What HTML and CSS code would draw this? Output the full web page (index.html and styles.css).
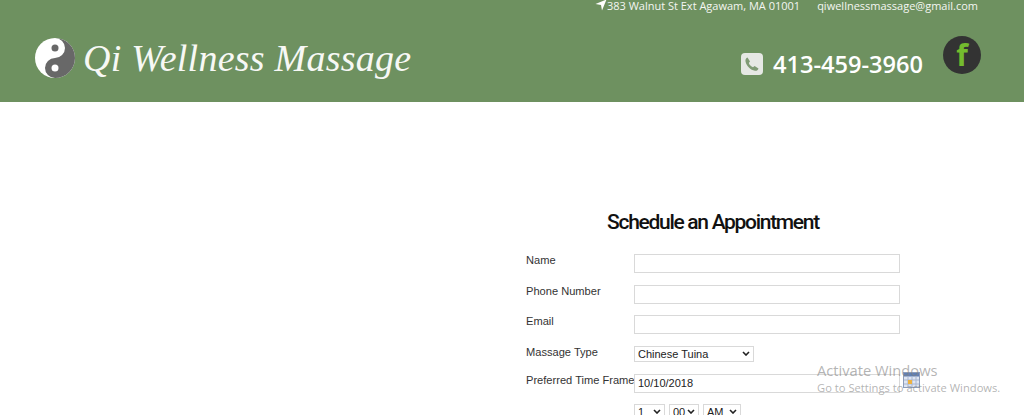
FILE: index.html
```html
<!DOCTYPE html>
<html lang="en">
<head>
  <meta charset="UTF-8">
  <title>Qi Wellness Massage - Schedule an Appointment</title>
  <link rel="stylesheet" href="styles.css">
</head>
<body>
  <!-- Header -->
  <header class="site-header">
    <div class="top-info">
      <span class="address">
        <svg class="arrow-icon" viewBox="0 0 12 12" width="12" height="12"><path d="M11.5 0.5 L0.5 5 L6 6 L7 11.5 Z" fill="#fff"/></svg>
        <span>383 Walnut St Ext Agawam, MA 01001</span>
      </span>
      <span class="email">qiwellnessmassage@gmail.com</span>
    </div>
    <div class="header-main">
      <div class="logo">
        <svg class="logo-mark" viewBox="0 0 40 40" width="40" height="40">
          <circle cx="20" cy="20" r="20" fill="#fff"/>
          <path d="M20 0 A20 20 0 0 1 20 40 A10 10 0 0 1 20 20 A10 10 0 0 0 20 0 Z" fill="#686868"/>
          <circle cx="20" cy="10" r="3.5" fill="#686868"/>
          <circle cx="20" cy="30" r="3.5" fill="#fff"/>
        </svg>
        <span class="logo-text">Qi Wellness Massage</span>
      </div>
      <div class="contact">
        <span class="phone-icon">
          <svg viewBox="0 0 22 22" width="22" height="22">
            <rect width="22" height="22" rx="4" fill="#e6e8e4"/>
            <path d="M6.5 4.5 L9 8.5 L7.8 10 C8.5 12 10 13.5 12 14.3 L13.6 13 L17.5 15.5 C17 17.5 15.5 18 14 17.8 C9.5 17 5.5 13 4.5 8.5 C4.2 6.5 5 5 6.5 4.5 Z" fill="#7f9a74"/>
          </svg>
        </span>
        <span class="phone-number">413-459-3960</span>
        <a class="fb-link" href="#">f</a>
      </div>
    </div>
  </header>

  <!-- Appointment Form -->
  <main class="content">
    <form class="appointment">
      <h1 class="form-title">Schedule an Appointment</h1>
      <div class="form-grid">
        <label class="field-label">Name</label>
        <input class="field-input" type="text">
        <label class="field-label">Phone Number</label>
        <input class="field-input" type="text">
        <label class="field-label">Email</label>
        <input class="field-input" type="text">
        <label class="field-label">Massage Type</label>
        <div><select class="type-select"><option>Chinese Tuina</option></select></div>
        <label class="field-label">Preferred Time Frame</label>
        <div class="date-row">
          <input class="field-input date-input" type="text" value="10/10/2018">
          <svg class="calendar-icon" viewBox="0 0 17 16" width="17" height="16">
            <rect x="0.5" y="0.5" width="16" height="15" fill="#dfe6f3" stroke="#8d9cb8"/>
            <rect x="1" y="1" width="15" height="3.5" fill="#5f7fb5"/>
            <path d="M1 8 H16 M1 12 H16 M5 4 V15 M9 4 V15 M13 4 V15" stroke="#a9b6cf" fill="none"/>
            <rect x="5" y="8" width="4" height="4" fill="#eeb240"/>
          </svg>
        </div>
        <span></span>
        <div class="time-row">
          <select class="time-select hour"><option>1</option></select>
          <select class="time-select minute"><option>00</option></select>
          <select class="time-select meridiem"><option>AM</option></select>
        </div>
      </div>
    </form>
  </main>

  <!-- Activation watermark -->
  <div class="watermark">
    <div class="watermark-title">Activate Windows</div>
    <div class="watermark-sub">Go to Settings to activate Windows.</div>
  </div>
</body>
</html>
```

FILE: styles.css
```css
* {
  margin: 0;
  padding: 0;
  box-sizing: border-box;
}

html, body {
  height: 415px;
  overflow: hidden;
}

body {
  font-family: "Liberation Sans", Arial, sans-serif;
  background-color: #fff;
  color: #333;
}

/* Header */
.site-header {
  height: 102px;
  background-color: #6e9160;
  color: #fff;
  padding: 0 43px 0 35px;
}

.top-info {
  display: flex;
  justify-content: flex-end;
  gap: 17px;
  height: 11px;
  padding-right: 3px;
  font-family: "Open Sans", sans-serif;
  font-size: 11px;
  line-height: 11px;
  color: #f4f6f2;
}

.address {
  display: flex;
  align-items: flex-start;
}

.arrow-icon {
  margin-top: -1px;
}

.header-main {
  display: flex;
  justify-content: space-between;
  padding-top: 26px;
}

.logo {
  display: flex;
  align-items: center;
  gap: 8px;
  height: 42px;
}

.logo-text {
  font-family: "Liberation Serif", serif;
  font-style: italic;
  font-size: 38px;
  letter-spacing: 0.25px;
  white-space: nowrap;
  color: #f7f8f5;
}

.contact {
  display: flex;
  align-items: flex-start;
}

.phone-icon {
  margin-top: 16px;
  height: 22px;
}

.phone-number {
  margin: 11px 20px 0 10px;
  font-family: "Open Sans", sans-serif;
  font-size: 23.6px;
  font-weight: 600;
  line-height: 32px;
  white-space: nowrap;
}

.fb-link {
  width: 38px;
  height: 38px;
  margin-top: -1px;
  border-radius: 50%;
  background-color: #333;
  color: #74bb2e;
  font-family: "Open Sans", sans-serif;
  font-size: 30px;
  font-weight: 700;
  line-height: 38px;
  text-align: center;
  text-decoration: none;
}

/* Form */
.content {
  display: flex;
  justify-content: flex-end;
  padding: 107px 124px 0 0;
}

.appointment {
  width: 374px;
}

.form-title {
  margin-bottom: 19px;
  font-family: "Roboto", sans-serif;
  font-size: 21px;
  font-weight: 500;
  letter-spacing: -1.3px;
  line-height: 26px;
  text-align: center;
  color: #111;
}

.form-grid {
  display: grid;
  grid-template-columns: 108px 266px;
  grid-auto-rows: min-content;
}

.field-label {
  font-size: 11.1px;
  line-height: 13px;
  white-space: nowrap;
}

.field-input {
  display: block;
  width: 266px;
  height: 19px;
  margin-bottom: 11.5px;
  padding: 0 3px;
  border: 1px solid #d9d9d9;
  background: #fff;
  font-family: "Liberation Sans", Arial, sans-serif;
  font-size: 11px;
  color: #222;
}

select {
  appearance: none;
  height: 16px;
  padding-left: 3px;
  border: 1px solid #d9d9d9;
  background: #fff url("data:image/svg+xml,%3Csvg xmlns='http://www.w3.org/2000/svg' width='8' height='5'%3E%3Cpath d='M1 1l3 3 3-3' fill='none' stroke='%23222' stroke-width='1.6'/%3E%3C/svg%3E") no-repeat right 3px center;
  font-family: "Liberation Sans", Arial, sans-serif;
  font-size: 11px;
  color: #222;
}

.type-select {
  display: block;
  width: 120px;
  margin-bottom: 12px;
}

.date-row {
  position: relative;
}

.date-input {
  margin-bottom: 11px;
}

.calendar-icon {
  position: absolute;
  left: 269px;
  top: -2px;
}

.time-row {
  display: flex;
  gap: 4px;
}

.hour {
  width: 31px;
}

.minute {
  width: 30px;
}

.meridiem {
  width: 38px;
}

/* Watermark */
.watermark {
  position: absolute;
  left: 817px;
  top: 361px;
  font-family: "Open Sans", sans-serif;
  color: rgba(130, 130, 130, 0.6);
  white-space: nowrap;
}

.watermark-title {
  font-size: 14.7px;
  line-height: 19px;
}

.watermark-sub {
  font-size: 11.2px;
  line-height: 16px;
}
```
